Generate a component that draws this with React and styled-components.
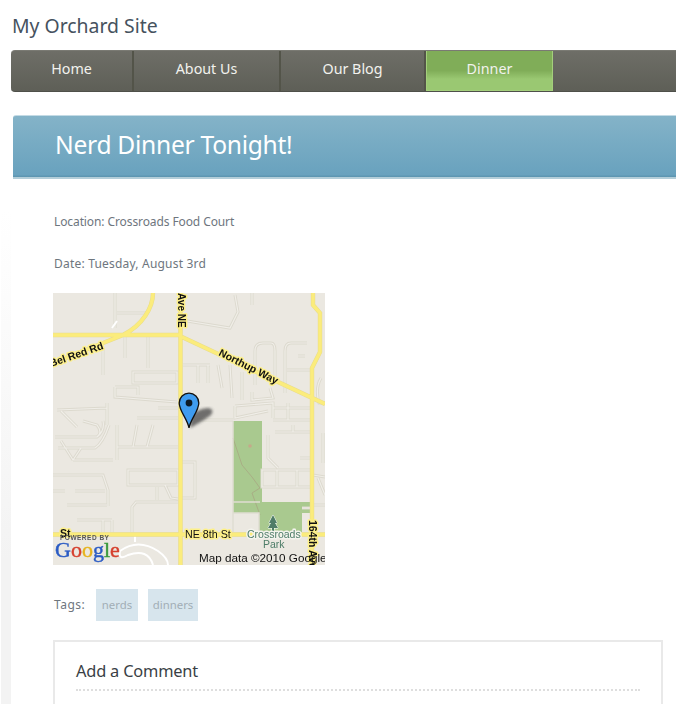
import React from "react";
import styled, { createGlobalStyle } from "styled-components";

const Global = createGlobalStyle`
  html, body { margin: 0; padding: 0; background: #fff; }
  body { font-family: "Noto Sans", "Open Sans", sans-serif; }
`;

const Page = styled.div`
  width: 676px;
  height: 704px;
  overflow: hidden;
  background: linear-gradient(to bottom, #fff 210px, #f3f3f3 560px) 1px 0 / 10px 100% no-repeat;
`;

const SiteTitle = styled.h1`
  margin: 0;
  padding: 0 0 0 12px;
  height: 50px;
  line-height: 51px;
  font-size: 19.4px;
  font-weight: 400;
  color: #46525e;
`;

const Nav = styled.nav`
  display: flex;
  width: 680px;
  height: 42px;
  margin-left: 11px;
  box-sizing: border-box;
  border-radius: 4px 0 0 4px;
  border-top: 1px solid #7a7a73;
  border-bottom: 1px solid #4f504a;
  background: linear-gradient(to bottom, #6e6e67, #5e5f57);
  overflow: hidden;
`;

const NavItem = styled.a`
  display: flex;
  align-items: center;
  justify-content: center;
  width: ${(p) => p.$w}px;
  box-sizing: border-box;
  padding-bottom: 5px;
  font-size: 14.3px;
  color: #f2f2ee;
  border-right: 2px solid #535449;
  ${(p) =>
    p.$active &&
    `
    background: linear-gradient(to bottom, #80ad58 0%, #80ad58 50%, #9ac872 72%, #9ac872 100%);
    border: 1px solid #a4cf7c;
    border-top-color: #86b25c;
    margin-top: -1px;
  `}
`;

const Hero = styled.header`
  height: 64px;
  margin: 23px 0 0 13px;
  box-sizing: border-box;
  padding: 0 0 4px 42px;
  display: flex;
  align-items: center;
  border-top: 1px solid #c4dbe5;
  border-bottom: 2px solid #b3ced9;
  border-radius: 3px 0 0 0;
  background: linear-gradient(to bottom, #84b3c8, #69a2be 96%, #5a93ae 100%);
`;

const HeroTitle = styled.h2`
  margin: 0;
  font-size: 24.6px;
  letter-spacing: -0.28px;
  font-weight: 400;
  color: #fff;
`;

const Content = styled.main`
  padding: 0 13px 0 53px;
`;

const Meta = styled.p`
  margin: ${(p) => p.$top}px 0 0 1px;
  font-size: 12px;
  line-height: 16px;
  letter-spacing: ${(p) => p.$track}px;
  color: #6e767e;
`;

const MapFrame = styled.svg`
  display: block;
  width: 272px;
  height: 272px;
  margin-top: 21px;
  filter: blur(0.3px);
`;

const Label = styled.text`
  font-family: "Liberation Sans", Arial, sans-serif;
  font-size: ${(p) => p.$size || 11}px;
  font-weight: ${(p) => (p.$bold ? 700 : 400)};
  letter-spacing: ${(p) => p.$track || 0}px;
  fill: ${(p) => p.$fill || "#111"};
  stroke: ${(p) => p.$halo || "#fdf08a"};
  stroke-width: ${(p) => (p.$halo === "none" ? 0 : 2.8)}px;
  stroke-linejoin: round;
  paint-order: stroke;
`;

const GoogleMark = styled.text`
  font-family: "Liberation Serif", serif;
  font-size: 22px;
`;

const GoogleLetter = styled.tspan`
  fill: ${(p) => p.$c};
  stroke: ${(p) => p.$c};
  stroke-width: 0.45px;
`;

const TagRow = styled.div`
  display: flex;
  align-items: center;
  margin: 24px 0 0 1px;
  height: 32px;
`;

const TagLabel = styled.span`
  font-size: 12px;
  letter-spacing: 0.5px;
  color: #6e767e;
  margin: 0 10px 2px 0;
  width: 32px;
`;

const Tag = styled.a`
  display: flex;
  align-items: center;
  justify-content: center;
  height: 32px;
  box-sizing: border-box;
  padding-bottom: 2px;
  width: ${(p) => p.$w}px;
  margin-right: 10px;
  background: #d7e5ed;
  font-size: 11.4px;
  color: #a2aeb6;
`;

const CommentBox = styled.section`
  margin-top: 19px;
  height: 120px;
  box-sizing: border-box;
  border: 2px solid #e9e9e9;
  border-bottom: 0;
  padding: 18px 21px 0 21px;
`;

const CommentTitle = styled.h3`
  margin: 0;
  padding-bottom: 7px;
  font-size: 16.4px;
  letter-spacing: -0.2px;
  line-height: 22px;
  font-weight: 400;
  color: #3a3f45;
  border-bottom: 2px dotted #dedede;
`;

const streets = `
M62,0V35 M64,20H94 M50,55V82 M72,42V65 M95,42V75
M80,79H124V90H80Z M62,94H85V102 M62,94V104L124,109
M105,115H125 M84,125H125
M4,117Q30,116 54,115 M54,110V132 M8,118L24,134 M30,128L44,132Q50,140 44,144
M2,144H44Q52,138 50,128 M5,155H42Q50,150 56,132 M20,167H60 M64,132V167 M64,154H125
M100,132L94,154 M84,132L80,154 M8,148L20,167 M28,155L20,167
M75,177H125V192H75Z M0,182H50L55,197V213 M0,198H12 M22,198H52
M14,212H54 M24,227H59 M50,227V239 M59,227V239
M79,239V214L83,209H125 M104,194V207 M112,192L118,205L125,206
M182,2L185,19L177,35L140,29L129,27 M199,0V12
M202,92V58Q202,50 210,50H218Q222,50 222,58V88
M232,100V58Q232,50 238,50H254 M234,77H259 M245,63H252
M130,72H157 M145,72V90 M155,72V90 M165,72L169,95 M177,72L179,105 M189,79V107
M199,99V107L220,105L217,95 M182,113L220,110V125 M182,113V125L215,118
M220,115H259 M220,127H259 M235,110V127 M144,127H180 M268,85Q262,95 266,110H272
M209,177H259V194H209Z M224,177V194 M244,177V194
M215,142V165L225,175 M222,139H259 M247,165H259 M240,132V139
M260,182L272,184 M265,185L272,202 M270,140V170
M129,169H142V205H129 M260,212H272 M249,215H259
`;

const roads =
  "M0,42H127M129,44L272,111M0,70L70,42C90,32 100,14 100,0M127.5,0V272M0,241.500H272M260,0V12L267,20V59L259,75V272";

const App = () => (
  <>
    <Global />
    <Page>
      <SiteTitle>My Orchard Site</SiteTitle>
      <Nav>
        <NavItem $w={123}>Home</NavItem>
        <NavItem $w={147}>About Us</NavItem>
        <NavItem $w={145}>Our Blog</NavItem>
        <NavItem $w={127} $active>Dinner</NavItem>
      </Nav>
      <Hero>
        <HeroTitle>Nerd Dinner Tonight!</HeroTitle>
      </Hero>
      <Content>
        <Meta $top={35} $track={-0.1}>Location: Crossroads Food Court</Meta>
        <Meta $top={26} $track={0.2}>Date: Tuesday, August 3rd</Meta>
        <MapFrame viewBox="0 0 272 272" role="img" aria-label="Map of Crossroads Food Court">
          <defs>
            <path id="streets" d={streets} fill="none" />
            <filter id="soft"><feGaussianBlur stdDeviation="1.6" /></filter>
          </defs>
          <rect width="272" height="272" fill="#ebe8e1" />
          <path d="M180,128H209V209H259V220H249V239H206V220H180Z" fill="#a9c98f" />
          <path d="M180,145L189,172L199,184L207,195L199,200L207,222" fill="none" stroke="#a8a783" strokeWidth="0.8" />
          <circle cx="197" cy="153" r="1.8" fill="#c5a98a" />
          <path d="M180,128V239M180,209H207M180,220H206V239" fill="none" stroke="#e0ddd2" strokeWidth="1.5" />
          <use href="#streets" stroke="#dcd9ce" strokeWidth="3" />
          <use href="#streets" stroke="#f0eee8" strokeWidth="1.2" />
          <path d="M82,242V249M67,258Q85,245 105,258Q115,265 115,272M67,258Q65,268 75,262Q95,255 100,272M59,35L64,28" fill="none" stroke="#fff" strokeWidth="2" />
          <path d={roads} fill="none" stroke="#e8dc8c" strokeWidth="4.4" />
          <path d={roads} fill="none" stroke="#fbec7c" strokeWidth="3.4" />
          <Label transform="translate(-2 74) rotate(-19)" $size={10.500} $bold>Bel Red Rd</Label>
          <Label transform="translate(165 62) rotate(27)" $size={10.500} $bold>Northup Way</Label>
          <Label transform="translate(125 0) rotate(90)" $size={10} $bold>Ave NE</Label>
          <Label transform="translate(256 227) rotate(90)" $size={10.500} $bold>164th Ave</Label>
          <Label x="132" y="245" $size={10.700}>NE 8th St</Label>
          <Label x="7" y="244" $size={10.500} $bold>St</Label>
          <path d="M220,222L224,230H222L225,235H221V238H219V235H215L218,230H216Z" fill="#4f7c68" stroke="#fff" strokeWidth="1" paintOrder="stroke" />
          <Label x="194" y="245" $size={10.500} $fill="#4e7d68" $halo="#f4f4ee">Crossroads</Label>
          <Label x="210" y="255" $size={10.500} $fill="#4e7d68" $halo="#ebe8e1">Park</Label>
          <path d="M137,135Q150,128 158,122Q162,116 155,115Q145,116 138,122Z" fill="#444" opacity=".75" filter="url(#soft)" />
          <path d="M136,135C134.500,126 126.200,118 126.200,110A9.800,9.800 0 1 1 145.800,110C145.800,118 137.500,126 136,135Z" fill="#3f9cf0" stroke="#111" strokeWidth="1.300" />
          <circle cx="136" cy="110" r="3.400" fill="#0c1a28" />
          <Label x="7" y="247" $size={6.500} $fill="#555" $halo="none" $bold $track={0.5}>POWERED BY</Label>
          <GoogleMark x="2" y="264">
            <GoogleLetter $c="#2a5bc4">G</GoogleLetter>
            <GoogleLetter $c="#d6402e">o</GoogleLetter>
            <GoogleLetter $c="#e6b41f">o</GoogleLetter>
            <GoogleLetter $c="#2a5bc4">g</GoogleLetter>
            <GoogleLetter $c="#3b9a3d">l</GoogleLetter>
            <GoogleLetter $c="#d6402e">e</GoogleLetter>
          </GoogleMark>
          <Label x="146" y="269" $size={11.700} $halo="none">Map data ©2010 Google</Label>
        </MapFrame>
        <TagRow>
          <TagLabel>Tags:</TagLabel>
          <Tag $w={42}>nerds</Tag>
          <Tag $w={50}>dinners</Tag>
        </TagRow>
        <CommentBox>
          <CommentTitle>Add a Comment</CommentTitle>
        </CommentBox>
      </Content>
    </Page>
  </>
);

export default App;
